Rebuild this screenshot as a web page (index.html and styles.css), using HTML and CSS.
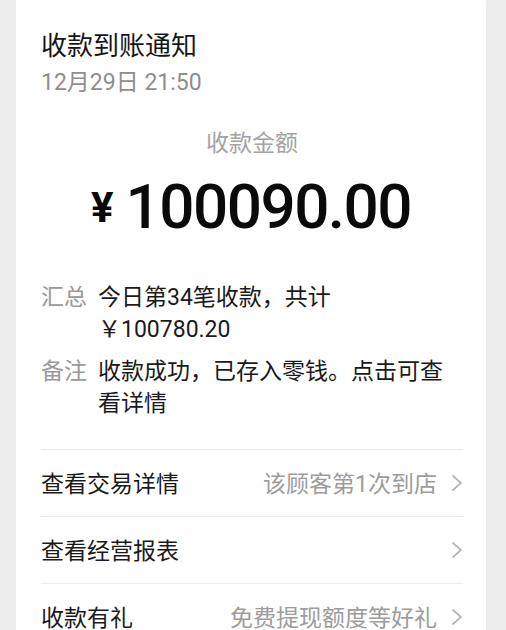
FILE: index.html
```html
<!DOCTYPE html>
<html lang="zh-CN">
<head>
<meta charset="utf-8">
<link rel="stylesheet" href="styles.css">
</head>
<body>
<div class="card">
  <div class="title">收款到账通知</div>
  <div class="date">12月29日 21:50</div>
  <div class="amount-label">收款金额</div>
  <div class="amount"><span class="yen">¥</span><span class="num">100090.00</span></div>
  <div class="info">
    <div class="info-row">
      <div class="info-key">汇总</div>
      <div class="info-val">今日第34笔收款，共计<br>￥100780.20</div>
    </div>
    <div class="info-row">
      <div class="info-key">备注</div>
      <div class="info-val">收款成功，已存入零钱。点击可查看详情</div>
    </div>
  </div>
  <div class="links">
    <div class="link">
      <span class="link-name">查看交易详情</span>
      <span class="link-extra">该顾客第1次到店</span>
      <svg class="chev" viewBox="0 0 12 18" width="12" height="18"><path d="M1.5 1.5 L10 9 L1.5 16.5" fill="none" stroke="#b4b4b4" stroke-width="1.7"/></svg>
    </div>
    <div class="link">
      <span class="link-name">查看经营报表</span>
      <span class="link-extra"></span>
      <svg class="chev" viewBox="0 0 12 18" width="12" height="18"><path d="M1.5 1.5 L10 9 L1.5 16.5" fill="none" stroke="#b4b4b4" stroke-width="1.7"/></svg>
    </div>
    <div class="link">
      <span class="link-name">收款有礼</span>
      <span class="link-extra">免费提现额度等好礼</span>
      <svg class="chev" viewBox="0 0 12 18" width="12" height="18"><path d="M1.5 1.5 L10 9 L1.5 16.5" fill="none" stroke="#b4b4b4" stroke-width="1.7"/></svg>
    </div>
  </div>
</div>
</body>
</html>
```
FILE: styles.css
```css
html, body {
  margin: 0;
  padding: 0;
}
body {
  background: #ededed;
  width: 506px;
  height: 630px;
  overflow: hidden;
  font-family: Roboto, "Noto Sans CJK SC", sans-serif;
  color: #1a1a1a;
}
.card {
  margin: -10px 20px 0 16px;
  background: #ffffff;
  border-radius: 14px;
  padding: 40px 23px 0 25px;
  min-height: 700px;
}
.title {
  font-size: 26px;
  line-height: 32px;
  color: #161616;
}
.date {
  margin-top: 5px;
  font-size: 23px;
  line-height: 32px;
  color: #8e8e8e;
}
.amount-label {
  margin-top: 29px;
  text-align: center;
  font-size: 23px;
  line-height: 32px;
  color: #a3a3a3;
}
.amount {
  display: flex;
  justify-content: center;
  align-items: flex-start;
  margin-top: 13px;
  height: 78px;
  color: #0a0a0a;
  padding-right: 2px;
}
.yen {
  font-size: 42px;
  font-weight: 700;
  line-height: 1;
  margin-top: 14px;
  margin-right: 12px;
}
.num {
  font-size: 62px;
  font-weight: 500;
  line-height: 1;
  letter-spacing: -1.5px;
  margin-top: 3px;
}
.info {
  margin-top: 31px;
  display: flex;
  flex-direction: column;
  gap: 10px;
  padding-bottom: 29px;
  border-bottom: 1px solid #ededed;
}
.info-row {
  display: flex;
  gap: 11px;
  font-size: 23px;
  line-height: 32px;
}
.info-key {
  color: #999999;
  flex: none;
}
.info-val {
  color: #1a1a1a;
  width: 355px;
}
.link {
  display: flex;
  align-items: center;
  height: 67px;
  border-bottom: 1px solid #ededed;
  font-size: 23px;
  padding-bottom: 2px;
  box-sizing: border-box;
}
.link-name {
  color: #1a1a1a;
  flex: 1;
}
.link-extra {
  color: #9c9c9c;
  margin-right: 14px;
}
.chev {
  flex: none;
  margin-top: 1px;
}
```
